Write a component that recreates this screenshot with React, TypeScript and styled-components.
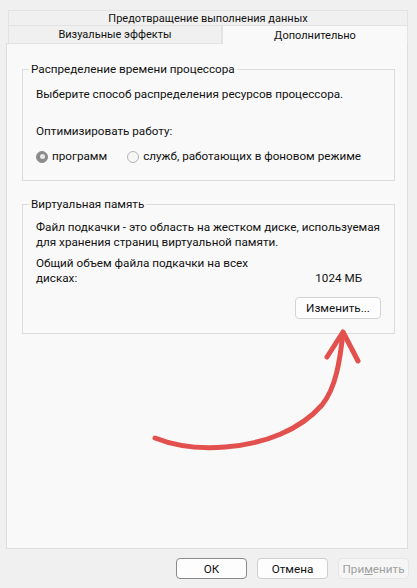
import { createGlobalStyle, styled } from "styled-components";

const GlobalStyle = createGlobalStyle`
  html, body {
    margin: 0;
    padding: 0;
    background: #f0f0f0;
  }
  body {
    font-family: Roboto, "Noto Sans", sans-serif;
    font-size: 11.7px;
    color: #1a1a1a;
  }
`;

const Window = styled.div`
  position: relative;
  width: 417px;
  height: 588px;
  padding: 10px 9px 0 6px;
  box-sizing: border-box;
  display: flex;
  flex-direction: column;
`;

const TabRow = styled.div`
  display: flex;
  margin-left: 2px;
  height: 16px;
`;

const Tab = styled.div<{ $active?: boolean; $wide?: boolean }>`
  flex: ${(p) => (p.$wide ? "1" : "0 0 auto")};
  width: ${(p) => (p.$wide ? "auto" : "214px")};
  box-sizing: border-box;
  display: flex;
  align-items: center;
  justify-content: center;
  font-size: 11px;
  line-height: 15px;
  white-space: nowrap;
  color: #111;
  background: ${(p) => (p.$active ? "#f9f9f9" : "#f0f0f0")};
  border: 1px solid #e3e3e3;
  border-bottom: ${(p) => (p.$active ? "none" : "1px solid #e3e3e3")};
  position: relative;
  z-index: ${(p) => (p.$active ? 2 : 0)};
`;

const SecondRow = styled(TabRow)`
  height: 19px;
  margin-top: -1px;
`;

const Panel = styled.div`
  height: 506px;
  box-sizing: border-box;
  background: #f9f9f9;
  border: 1px solid #dedede;
  margin-top: -1px;
  padding: 17px 12px 0 15px;
  display: flex;
  flex-direction: column;
  gap: 15px;
`;

const Group = styled.fieldset<{ $height: number; $top: number }>`
  margin: 0;
  min-width: 0;
  height: ${(p) => p.$height}px;
  box-sizing: border-box;
  border: 1px solid #dcdcdc;
  padding: ${(p) => p.$top}px 13px 0 13px;
  display: flex;
  flex-direction: column;
`;

const Legend = styled.legend`
  margin-left: -7px;
  padding: 0 2px;
  line-height: 16px;
  white-space: nowrap;
  color: #111;
`;

const Line = styled.div<{ $top?: number }>`
  line-height: 15px;
  margin-top: ${(p) => p.$top ?? 0}px;
  white-space: nowrap;
  color: #111;
`;

const RadioRow = styled.div`
  display: flex;
  align-items: center;
  margin-top: 10px;
  gap: 20px;
`;

const RadioOption = styled.label`
  display: flex;
  align-items: center;
  gap: 4px;
  line-height: 15px;
  white-space: nowrap;
  color: #111;
`;

const RadioMark = styled.span<{ $checked?: boolean }>`
  width: 12px;
  height: 12px;
  border-radius: 50%;
  box-sizing: border-box;
  background: ${(p) => (p.$checked ? "#8c8c8c" : "#f6f6f6")};
  border: 1px solid ${(p) => (p.$checked ? "#8c8c8c" : "#b5b5b5")};
  display: flex;
  align-items: center;
  justify-content: center;
  &::after {
    content: "";
    display: ${(p) => (p.$checked ? "block" : "none")};
    width: 5px;
    height: 5px;
    border-radius: 50%;
    background: #e8e8e8;
  }
`;

const TotalRow = styled.div`
  display: flex;
  align-items: flex-end;
  justify-content: space-between;
  margin-top: 6px;
  padding-right: 19px;
`;

const Button = styled.button<{ $disabled?: boolean; $primary?: boolean }>`
  font-family: inherit;
  font-size: 11.7px;
  height: 21px;
  width: 71px;
  padding: 0;
  box-sizing: border-box;
  border-radius: 4px;
  background: ${(p) => (p.$disabled ? "#f5f5f5" : "#fdfdfd")};
  border: 1px solid ${(p) => (p.$disabled ? "#e6e6e6" : p.$primary ? "#8a8a8a" : "#cfcfcf")};
  color: ${(p) => (p.$disabled ? "#a0a0a0" : "#111")};
  u {
    text-decoration: underline;
  }
`;

const ChangeButton = styled(Button)`
  width: 86px;
  height: 22px;
  align-self: flex-end;
  margin-top: 11px;
  border-color: #d3d3d3;
`;

const Footer = styled.div`
  display: flex;
  justify-content: flex-end;
  gap: 10px;
  margin-top: 9px;
  margin-right: -1px;
`;

const Arrow = () => (
  <svg
    width="417"
    height="588"
    style={{ position: "absolute", left: 0, top: 0, pointerEvents: "none" }}
  >
    <g
      fill="none"
      stroke="#e2514e"
      strokeWidth="5"
      strokeLinecap="round"
      strokeLinejoin="round"
    >
      <path d="M155 438 C175 446 200 449 225 447 C265 444 300 430 322 405 C336 388 340 360 343 333" />
      <path d="M327 357 L343 332 L358 361" />
    </g>
  </svg>
);

const App = () => {
  return (
    <Window>
      <GlobalStyle />
      <TabRow>
        <Tab $wide>Предотвращение выполнения данных</Tab>
      </TabRow>
      <SecondRow>
        <Tab>Визуальные эффекты</Tab>
        <Tab $wide $active>
          Дополнительно
        </Tab>
      </SecondRow>
      <Panel>
        <Group $height={120} $top={10}>
          <Legend>Распределение времени процессора</Legend>
          <Line>Выберите способ распределения ресурсов процессора.</Line>
          <Line $top={22}>Оптимизировать работу:</Line>
          <RadioRow>
            <RadioOption>
              <RadioMark $checked />
              программ
            </RadioOption>
            <RadioOption>
              <RadioMark />
              служб, работающих в фоновом режиме
            </RadioOption>
          </RadioRow>
        </Group>
        <Group $height={138} $top={8}>
          <Legend>Виртуальная память</Legend>
          <Line>Файл подкачки - это область на жестком диске, используемая</Line>
          <Line>для хранения страниц виртуальной памяти.</Line>
          <TotalRow>
            <Line>
              Общий объем файла подкачки на всех
              <br />
              дисках:
            </Line>
            <Line>1024 МБ</Line>
          </TotalRow>
          <ChangeButton>Изменить...</ChangeButton>
        </Group>
      </Panel>
      <Footer>
        <Button $primary>ОК</Button>
        <Button>Отмена</Button>
        <Button $disabled>
          При<u>м</u>енить
        </Button>
      </Footer>
      <Arrow />
    </Window>
  );
};

export default App;
